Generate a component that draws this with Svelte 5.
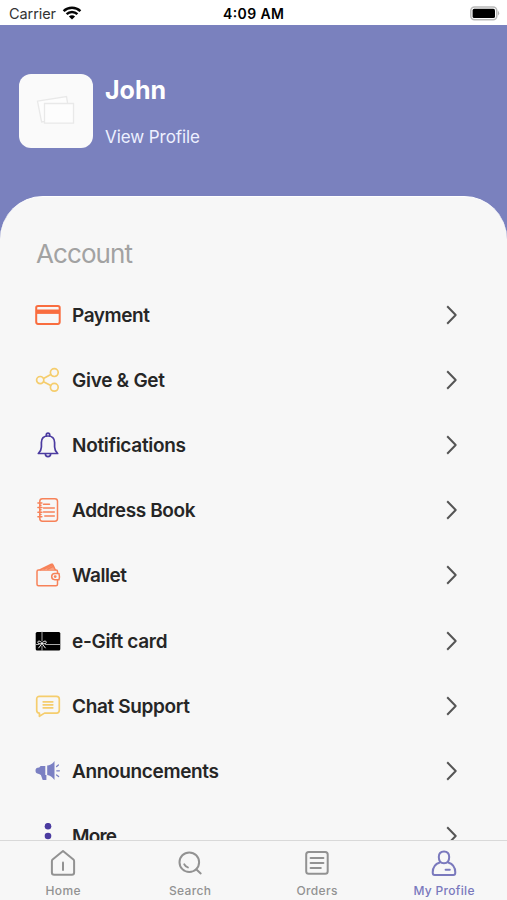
<script lang="ts">
	type Item = { key: string; label: string; width: number };

	const items: Item[] = [
		{ key: 'payment', label: 'Payment', width: 78 },
		{ key: 'share', label: 'Give & Get', width: 93 },
		{ key: 'bell', label: 'Notifications', width: 114 },
		{ key: 'book', label: 'Address Book', width: 123.5 },
		{ key: 'wallet', label: 'Wallet', width: 55 },
		{ key: 'gift', label: 'e-Gift card', width: 95.5 },
		{ key: 'chat', label: 'Chat Support', width: 118 },
		{ key: 'announce', label: 'Announcements', width: 147 },
		{ key: 'more', label: 'More', width: 45 }
	];

	const tabs: Item[] = [
		{ key: 'home', label: 'Home', width: 35 },
		{ key: 'search', label: 'Search', width: 42 },
		{ key: 'orders', label: 'Orders', width: 41 },
		{ key: 'profile', label: 'My Profile', width: 61 }
	];

	let active: string = 'profile';
</script>

<div class="screen">
	<header class="status">
		<div class="carrier">
			<svg class="carrier-text" width="48" height="18"><text x="0" y="15" textLength="47">Carrier</text></svg>
			<svg width="20" height="14" viewBox="0 0 20 14">
				<g fill="none" stroke="#050505" stroke-width="2.5">
					<path d="M1.6 5.1a12.2 12.2 0 0 1 16.8 0" />
					<path d="M4.6 8.2a7.8 7.8 0 0 1 10.8 0" />
				</g>
				<path d="M10 13.6 6.9 10.5a4.4 4.4 0 0 1 6.2 0z" />
			</svg>
		</div>
		<svg class="time" width="62" height="18"><text x="0" y="15" textLength="61">4:09 AM</text></svg>
		<div class="battery">
			<svg width="31" height="15" viewBox="0 0 31 15">
				<rect x="1.8" y="1" width="26" height="12.8" rx="3.7" fill="#fff" stroke="#b9b9b9" stroke-width="1.5" />
				<rect x="3.6" y="2.8" width="22.4" height="9.2" rx="1.6" />
				<path d="M29 4.8q2.4 2.4 0 4.8z" fill="#b5b5b5" />
			</svg>
		</div>
	</header>

	<section class="profile">
		<div class="avatar">
			<svg width="40" height="32" viewBox="0 0 40 32" fill="#fdfdfd" stroke="#e9e9e9" stroke-width="1.3">
				<path d="m1.5 6.2 29-4.6 3.4 21-28.3 4.4z" />
				<path d="M8.5 8.5h29v19.7h-29z" />
			</svg>
		</div>
		<div class="person">
			<svg class="name" width="100" height="30"><text x="0" y="24" textLength="61">John</text></svg>
			<svg class="view" width="110" height="24"><text x="0" y="18" textLength="95">View Profile</text></svg>
		</div>
	</section>

	<main class="sheet">
		<svg class="heading" width="110" height="34"><text x="0" y="24" textLength="97">Account</text></svg>
		<ul class="menu">
			{#each items as item}
				<li>
					<svg class="icon {item.key}" width="26" height="26" viewBox="0 0 26 26">
						{#if item.key === 'payment'}
							<rect x="1.2" y="3.9" width="23.5" height="18" rx="1.8" stroke-width="2" />
							<path class="solid" d="M1 7.5h24v4.4H1z" />
						{:else if item.key === 'share'}
							<circle cx="5.2" cy="13.1" r="3.6" />
							<circle cx="19.3" cy="5.6" r="3.9" />
							<circle cx="19.3" cy="20.3" r="3.9" />
							<path d="m8.5 11.4 7.3-4M8.5 14.8l7.3 3.8" />
						{:else if item.key === 'bell'}
							<path d="M3.3 21.5h19.4c-1.9-1.8-3.1-3.3-3.1-6.5v-4.5C19.6 6.4 17 4 13 4s-6.6 2.4-6.6 6.5V15c0 3.2-1.2 4.7-3.1 6.5z" />
							<path d="M11.3 4V2.8a1.7 1.7 0 0 1 3.4 0V4M10.4 22a2.6 2.6 0 0 0 5.2 0" />
						{:else if item.key === 'book'}
							<rect x="4.8" y="1.7" width="17.7" height="22.5" rx="2.6" />
							<path d="M2.9 6h4m-4 4.5h4m-4 4.7h4m-4 4.6h4M8.5 7.3h6M8.5 11h10.8M8.5 15.1h8m-8 0h10.8M9.8 19.1h9.5" />
							<path d="M5 8.2h1m-1 4.6h1m-1 4.7h1" />
						{:else if item.key === 'wallet'}
							<path d="M22.5 11V9.5c0-.9-.6-1.5-1.5-1.5H3.5C2.5 8 2 8.6 2 9.5v12.7c0 1 .6 1.5 1.5 1.5H21c1 0 1.5-.6 1.5-1.5V18" />
							<path class="money" d="m5.2 7.7 11.2-5.4c.8-.4 1.3 0 1.6.7l2.2 4.7M9 7l8-4m-4.2 4.2 5-2.6" />
							<path d="M24 11.5h-4.2a3.1 3.1 0 0 0 0 6.2H24c.5-1.8.5-4.4 0-6.2z" />
							<circle cx="20.2" cy="14.6" r=".7" />
						{:else if item.key === 'gift'}
							<rect class="solid" x=".7" y="4" width="24.6" height="18.5" rx="1.5" />
							<path d="M7 4v9m0 5v4.5M1 16.5h3m6.5 0h14.8" />
							<path class="bow" d="M7 15.5c-1-2.8-4.2-3.2-4.2-1.2 0 1.4 2 1.8 4.2 1.2 2.5.6 4.3.2 4.3-1.2 0-2-3.3-1.6-4.3 1.2zm-.3.4-3 4m3.6-4 3 4" />
						{:else if item.key === 'chat'}
							<path d="M4.5 3.3h17c1.8 0 2.8 1 2.8 2.7v11.3c0 1.8-1 2.8-2.8 2.8H9.5l-5.1 3.2v-3.2c-1.7 0-2.7-1-2.7-2.8V6c0-1.7 1-2.7 2.8-2.7z" />
							<path d="M8.2 8.8h9.6m-9.6 3h9.6m-9.6 3h9.6" />
						{:else if item.key === 'announce'}
							<path class="solid" d="M10.3 8H5.6L4.2 9.5C1.6 9.5.5 10.5.5 12.6s1 3.2 3.5 3.4l1.9 1.1 1.8 5h3.7v-5h-1.1z" />
							<path class="solid" d="M12.2 7.6c2.7-.4 5.2-1.5 7.3-4.5v19c-2.1-2.9-4.6-4.6-7.3-5z" />
							<path d="M21.6 8.6 23.4 7m-1.6 5.8h2.6M21.6 17l2 1.5" />
						{:else}
							<circle class="solid" cx="13" cy="3.2" r="3.3" />
							<circle class="solid" cx="13" cy="13" r="3.3" />
							<circle class="solid" cx="13" cy="22.8" r="3.3" />
						{/if}
					</svg>
					<svg class="label" width="180" height="28"><text x="0" y="20.8" textLength={item.width}>{item.label}</text></svg>
					<svg class="chevron" width="14" height="22" viewBox="0 0 14 22"><path d="m2.2 2.3 8.5 8.7-8.5 8.7" /></svg>
				</li>
			{/each}
		</ul>
	</main>

	<nav>
		{#each tabs as tab}
			<button class:active={tab.key === active} on:click={() => (active = tab.key)}>
				<svg class="tab-icon" width="28" height="28" viewBox="0 0 28 28">
					{#if tab.key === 'home'}
						<path d="M14 2.1 3.6 10.6q-.7.6-.7 1.6v11.3q0 2.2 2.2 2.2h17.8q2.2 0 2.2-2.2V12.2q0-1-.7-1.6z" />
						<path d="M14 13.5V21" />
					{:else if tab.key === 'search'}
						<circle cx="13.3" cy="13.2" r="9.8" />
						<path d="m20.2 20.3 4.5 4.1M8.3 15.4c.8 1.6 2 2.6 3.6 3" />
					{:else if tab.key === 'orders'}
						<rect x="3.2" y="3" width="21.5" height="21.7" rx="2.5" />
						<path d="M7.6 9h12.8M7.6 14h12.8M7.6 19h10.2" />
					{:else}
						<path d="M14 2.5c-3.2 0-5.2 2-5.2 5.5 0 3.8 1.8 6.3 5.2 6.3s5.2-2.5 5.2-6.3c0-3.5-2-5.5-5.2-5.5z" />
						<path d="M9.8 13.5C5 15 2.7 18.5 2.7 23.5q0 2.5 2 2.5h18.6q2 0 2-2.5c0-5-2.3-8.5-7.1-10M15.6 20.7h4.2" />
					{/if}
				</svg>
				<svg class="tab-label" width="70" height="20"><text x="35" y="18" text-anchor="middle" textLength={tab.width}>{tab.label}</text></svg>
			</button>
		{/each}
	</nav>
</div>

<style>
	:global(body) {
		margin: 0;
		overflow: hidden;
	}

	.screen {
		display: flex;
		flex-direction: column;
		width: 507px;
		height: 900px;
		overflow: hidden;
		background: #7a81be;
		font-family: Inter, 'Liberation Sans', sans-serif;
	}

	svg {
		display: block;
		flex: none;
	}

	.status {
		display: grid;
		grid-template-columns: 1fr 62px 1fr;
		align-items: center;
		box-sizing: border-box;
		height: 25px;
		padding: 1px 7px 0 9px;
		background: #fff;
		font-size: 14.5px;
	}

	.carrier {
		display: flex;
		align-items: center;
		gap: 5px;
	}

	.carrier-text {
		fill: #333;
	}

	.time {
		margin-left: -1px;
		font-size: 14px;
		font-weight: 600;
	}

	.battery {
		display: flex;
		justify-content: flex-end;
	}

	.profile {
		display: flex;
		box-sizing: border-box;
		height: 171px;
		padding: 49px 19px 0;
		gap: 12px;
	}

	.avatar {
		display: flex;
		align-items: center;
		justify-content: center;
		width: 74px;
		height: 74px;
		border-radius: 12px;
		background: #fafafa;
	}

	.person {
		display: flex;
		flex-direction: column;
		gap: 20px;
		padding-top: 1px;
		fill: #fff;
	}

	.name {
		font-size: 25px;
		font-weight: 700;
	}

	.view {
		fill: #edf0ff;
		font-size: 17px;
	}

	.sheet {
		flex: 1;
		min-height: 0;
		box-sizing: border-box;
		padding: 42px 48px 0 34.5px;
		overflow: hidden;
		border-top: 1px solid #fff;
		border-radius: 43px 43px 0 0;
		background: #f7f7f7;
	}

	.heading {
		margin-left: 1px;
		fill: #a2a2a2;
		font-size: 26px;
	}

	.menu {
		list-style: none;
		margin: 9px 0 0;
		padding: 0;
	}

	.menu li {
		display: flex;
		align-items: center;
		height: 65.2px;
	}

	.label {
		margin-left: 11.5px;
		margin-right: auto;
		fill: #262626;
		font-size: 19px;
		font-weight: 600;
	}

	.icon,
	.chevron,
	.tab-icon {
		fill: none;
		stroke: currentColor;
		stroke-width: 1.7;
		stroke-linejoin: round;
		stroke-linecap: round;
	}

	.chevron {
		color: #555;
		stroke-width: 2;
		stroke-linecap: butt;
	}

	.solid {
		fill: currentColor;
		stroke: none;
	}

	.payment {
		color: #f96d3f;
	}

	.share,
	.chat {
		color: #f5cd6d;
	}

	.bell,
	.more {
		color: #4b3ba0;
	}

	.book,
	.wallet {
		color: #f78259;
		stroke-width: 1.5;
	}

	.money {
		fill: #f9a384;
	}

	.gift {
		stroke: #aaa;
		stroke-width: 1;
		color: #000;
	}

	.bow {
		stroke: #eee;
	}

	.announce {
		color: #7b80c3;
		stroke-width: 1.3;
	}

	nav {
		display: grid;
		grid-template-columns: repeat(4, 1fr);
		box-sizing: border-box;
		height: 60px;
		border-top: 1px solid #d9d9d9;
		background: #f7f7f7;
	}

	nav button {
		display: flex;
		flex-direction: column;
		align-items: center;
		padding: 8px 0 0;
		border: none;
		background: transparent;
		color: #929292;
		font: 500 12px Inter, 'Liberation Sans', sans-serif;
	}

	nav button.active {
		color: #7a79bd;
	}

	.tab-icon {
		stroke-width: 2;
	}

	.tab-label {
		fill: currentColor;
	}
</style>
